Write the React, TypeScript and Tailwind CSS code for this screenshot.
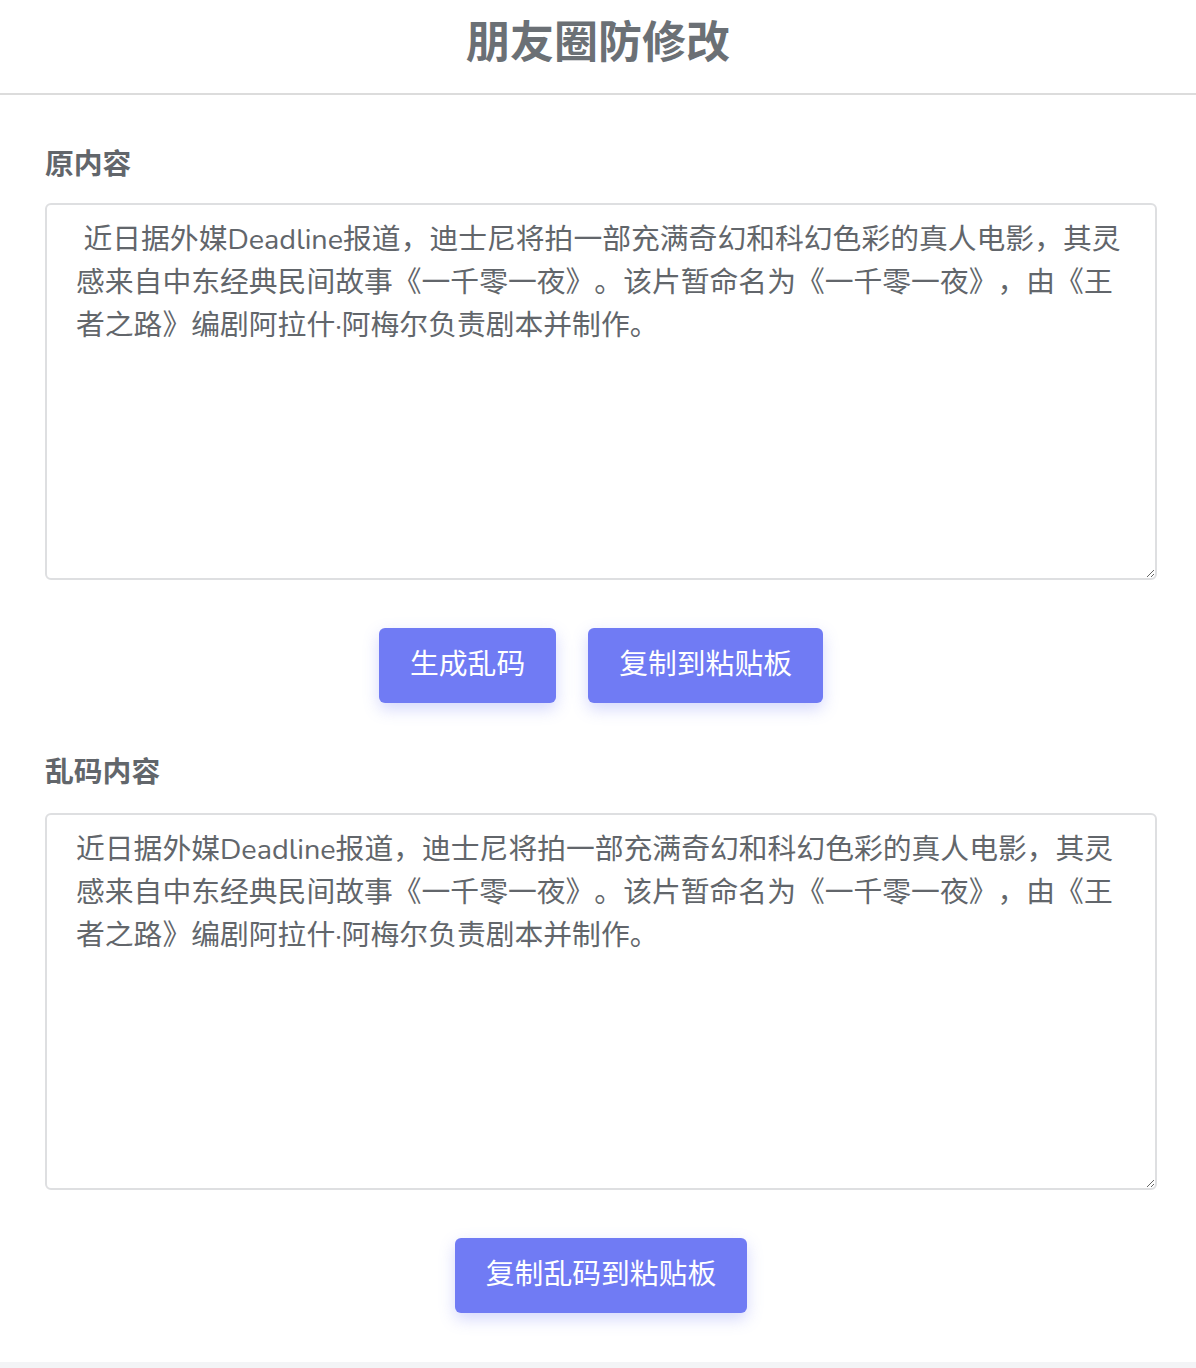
import React, { useState } from 'react';

const FONT = "font-['Nunito','Lato','Noto_Sans_CJK_SC',sans-serif]";

const SOURCE =
  ' 近日据外媒Deadline报道，迪士尼将拍一部充满奇幻和科幻色彩的真人电影，其灵感来自中东经典民间故事《一千零一夜》。该片暂命名为《一千零一夜》，由《王者之路》编剧阿拉什·阿梅尔负责剧本并制作。';

const GARBLED =
  '近日据外媒Deadline报道，迪士尼将拍一部充满奇幻和科幻色彩的真人电影，其灵感来自中\u200b东经典民间故事《一千零一夜》。该片暂命名为《一千零一夜》，由《王者之路》编剧阿拉什·阿梅尔负责剧本并制作。';

const Btn = ({ children }: { children: React.ReactNode }) => (
  <button className="h-[75px] px-[31px] rounded-[6px] bg-[#707bf4] text-white text-[28.8px] leading-none shadow-[0_6px_16px_rgba(112,123,244,0.3)]">
    {children}
  </button>
);

const Area = ({ value, onChange }: { value: string; onChange: (v: string) => void }) => (
  <textarea
    value={value}
    onChange={(e) => onChange(e.target.value)}
    className={`${FONT} block w-full h-[377px] border-2 border-[#dedfe1] rounded-[6px] pt-[13px] pl-[29px] pr-[28px] text-[28.8px] leading-[43px] text-[#62666b] outline-none [text-spacing-trim:space-all]`}
  />
);

export default function App() {
  const [src, setSrc] = useState(SOURCE);
  const [out, setOut] = useState(GARBLED);

  return (
    <div className={`${FONT} min-h-[1368px] bg-[#f3f4f6]`}>
      <div className="bg-white">
        <header className="h-[95px] border-b-2 border-[#dcdcdc] flex justify-center pt-[18px]">
          <h1 className="text-[44px] leading-[52px] font-bold text-[#6b7075]">朋友圈防修改</h1>
        </header>

        <main className="pl-[45px] pr-[39px] pt-[50px] pb-[49px]">
          <h2 className="text-[28.8px] leading-[40px] font-bold text-[#62666b] mb-[18px]">原内容</h2>
          <Area value={src} onChange={setSrc} />

          <div className="flex justify-center gap-[32px] mt-[48px]">
            <Btn>生成乱码</Btn>
            <Btn>复制到粘贴板</Btn>
          </div>

          <h2 className="text-[28.8px] leading-[40px] font-bold text-[#62666b] mt-[50px] mb-[20px]">乱码内容</h2>
          <Area value={out} onChange={setOut} />

          <div className="flex justify-center mt-[48px]">
            <Btn>复制乱码到粘贴板</Btn>
          </div>
        </main>
      </div>
    </div>
  );
}
